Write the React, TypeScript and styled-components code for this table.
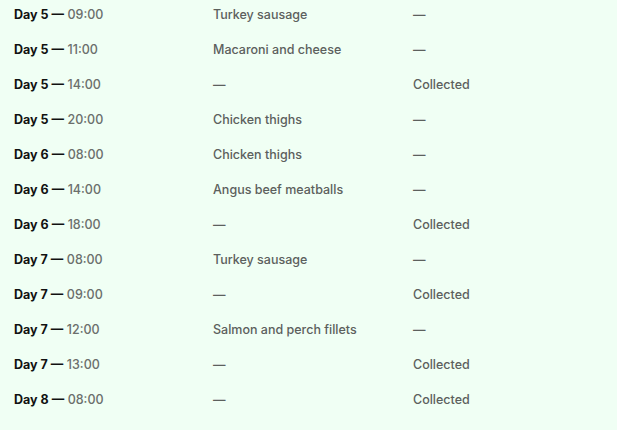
import React from 'react';
import styled, { createGlobalStyle } from 'styled-components';

const GlobalStyle = createGlobalStyle`
  html, body {
    margin: 0;
    padding: 0;
    background: #f0fff4;
  }
  body {
    font-family: Inter, "Noto Sans", "Liberation Sans", sans-serif;
    -webkit-font-smoothing: antialiased;
  }
`;

type Entry = {
  day: number;
  time: string;
  meal?: string;
  collected?: boolean;
};

const entries: Entry[] = [
  { day: 5, time: '09:00', meal: 'Turkey sausage' },
  { day: 5, time: '11:00', meal: 'Macaroni and cheese' },
  { day: 5, time: '14:00', collected: true },
  { day: 5, time: '20:00', meal: 'Chicken thighs' },
  { day: 6, time: '08:00', meal: 'Chicken thighs' },
  { day: 6, time: '14:00', meal: 'Angus beef meatballs' },
  { day: 6, time: '18:00', collected: true },
  { day: 7, time: '08:00', meal: 'Turkey sausage' },
  { day: 7, time: '09:00', collected: true },
  { day: 7, time: '12:00', meal: 'Salmon and perch fillets' },
  { day: 7, time: '13:00', collected: true },
  { day: 8, time: '08:00', collected: true },
];

export default function App() {
  return (
    <>
      <GlobalStyle />
      <Log>
        {entries.map((e, i) => (
          <Row key={i}>
            <When>
              <Day>Day {e.day} —</Day> <Time>{e.time}</Time>
            </When>
            <Cell>{e.meal ?? '—'}</Cell>
            <Cell>{e.collected ? 'Collected' : '—'}</Cell>
          </Row>
        ))}
      </Log>
    </>
  );
}

const Log = styled.div`
  width: 617px;
  height: 430px;
  padding-left: 14px;
  box-sizing: border-box;
`;

const Row = styled.div`
  display: grid;
  grid-template-columns: 199px 200px 1fr;
  height: 35px;
  padding-top: 7px;
  box-sizing: border-box;
  font-size: 12.5px;
  line-height: 16px;
`;

const When = styled.div`
  white-space: nowrap;
`;

const Day = styled.span`
  font-weight: 700;
  color: #111111;
`;

const Time = styled.span`
  font-weight: 500;
  color: #6b6f6c;
`;

const Cell = styled.div`
  font-weight: 500;
  color: #5c605d;
  white-space: nowrap;
`;
